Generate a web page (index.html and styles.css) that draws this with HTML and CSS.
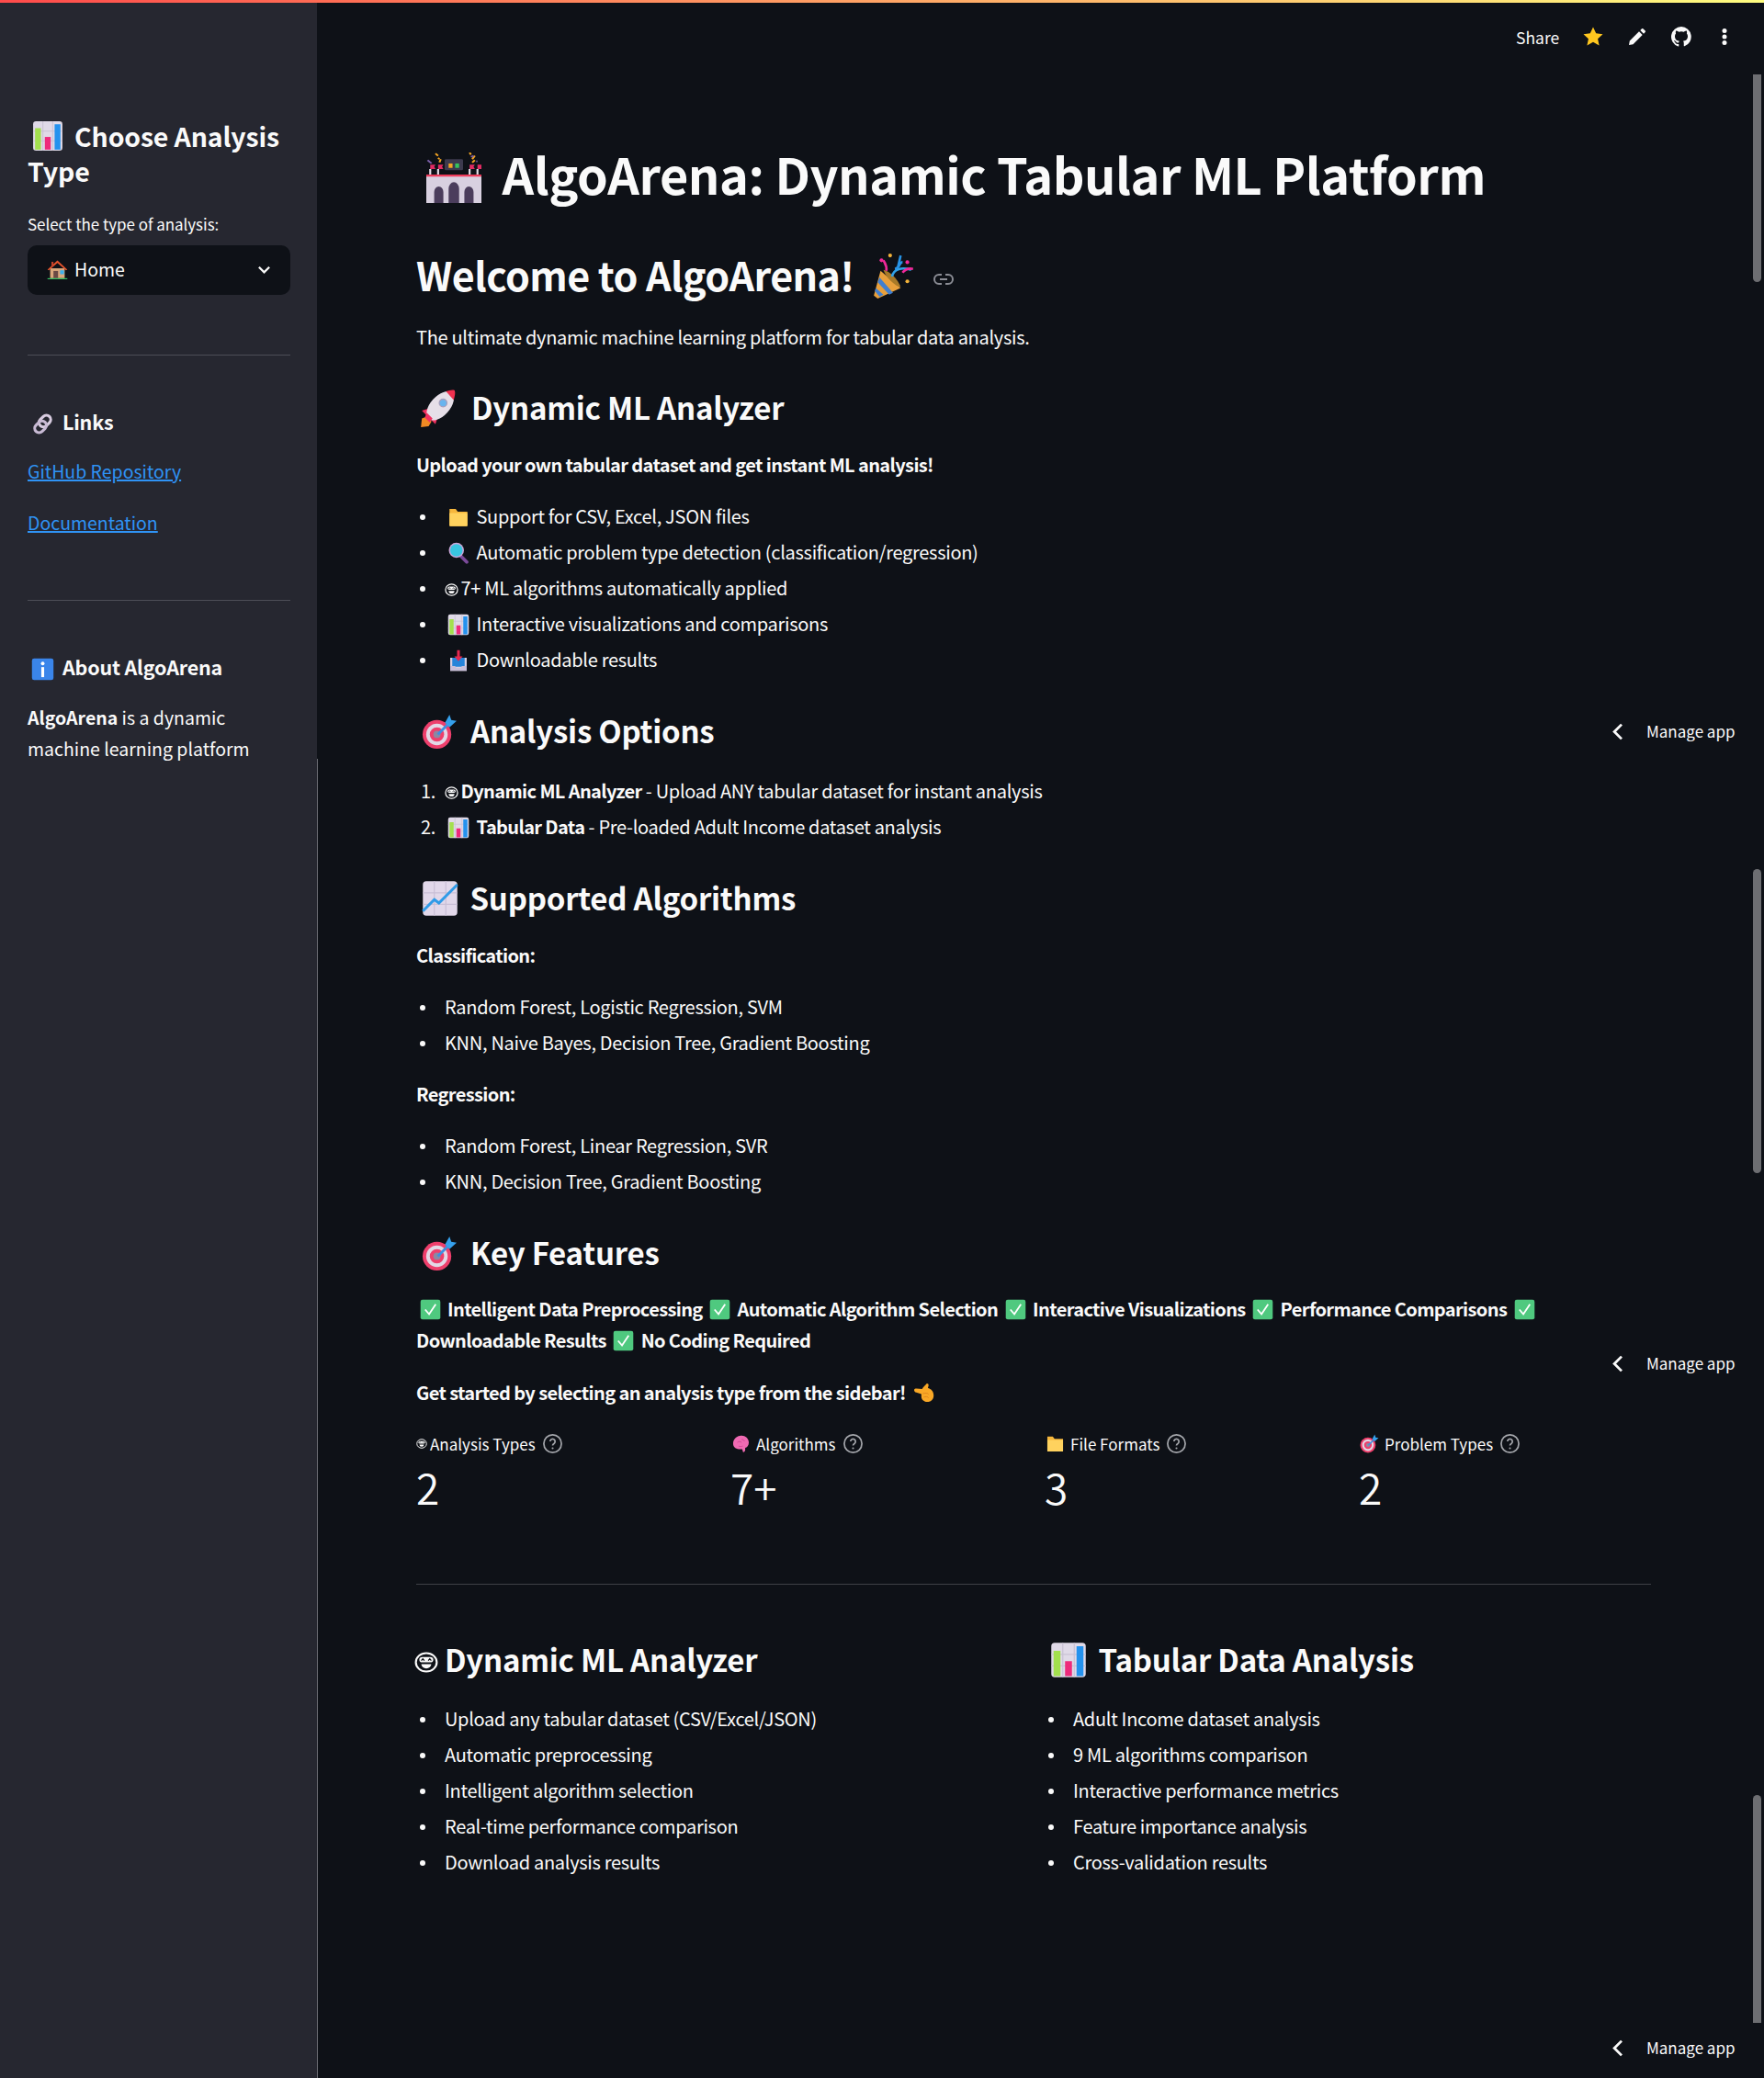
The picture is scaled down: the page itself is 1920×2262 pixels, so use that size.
FILE: index.html
```html
<!DOCTYPE html>
<html lang="en">

<head>
    <meta charset="UTF-8">
    <title>AlgoArena</title>
    <link rel="stylesheet" href="styles.css">
</head>

<body>
    <svg class="sprites" xmlns="http://www.w3.org/2000/svg">
        <symbol id="e-chart" viewBox="0 0 32 32">
            <rect x="1" y="1" width="30" height="30" rx="3" fill="#e0dae8"/>
            <path d="M1 11h30M1 21h30M11 1v30M21 1v30" stroke="#c9c2d4" stroke-width="1"/>
            <rect x="3" y="8" width="6" height="22" fill="#a3e04e"/>
            <rect x="13" y="17" width="6" height="13" fill="#ee2a7b"/>
            <rect x="23" y="4" width="6" height="26" fill="#2492ee"/>
        </symbol>
        <symbol id="e-chartup" viewBox="0 0 32 32">
            <rect x="1" y="1" width="30" height="30" rx="3" fill="#e2d8ea"/>
            <path d="M1 11h30M1 21h30M11 1v30M21 1v30" stroke="#c9bfd6" stroke-width="1"/>
            <path d="M1 27l10-10 4 3L31 4" fill="none" stroke="#2f9be8" stroke-width="2.4"/>
        </symbol>
        <symbol id="e-stadium" viewBox="3 0 42 46" preserveAspectRatio="none">
            <path d="M3 20h42v26H3z" fill="#d8d0e0"/>
            <path d="M3 20h42v2H3z" fill="#ee3b5b"/>
            <path d="M9 46V36a3.500 5 0 0 1 7 0v10zM20 46V33a4 6 0 0 1 8 0v13zM32 46V36a3.500 5 0 0 1 7 0v10z" fill="#4b3d5c"/>
            <path d="M6 20v-5M12 20v-5M36 20v-5M42 20v-5" stroke="#e6e0ea" stroke-width="1.500"/>
            <path d="M6 11h4l-1 2 1 2H6zM12 11h4l-1 2 1 2h-4zM36 11h4l-1 2 1 2h-4zM42 11h4l-1 2 1 2h-4z" fill="#e02b63"/>
            <rect x="17" y="6" width="14" height="10" rx="1" fill="#3d3a4e"/>
            <path d="M20 10h3v4h-3z" fill="#f6a623"/>
            <path d="M25 10h3v4h-3z" fill="#36c45c"/>
            <path d="M10 1l2 2M14 6l-1 3M40 3l-2 3M36 0l1 2M38 9l2-2M12 5l1 1" stroke="#f6a623" stroke-width="1.500"/>
            <path d="M4 7l3 3M37 4l2-1M41 8h1" stroke="#7a5fa8" stroke-width="1.500"/>
        </symbol>
        <symbol id="e-party" viewBox="0 0 48 48">
            <path d="M10 18L3 44l4 3 24-11z" fill="#e8a03c"/>
            <path d="M7 30l12 13 4-2-14-16zM4 39l5 6 4-2-8-7z" fill="#3f7fd1"/>
            <path d="M13 17a7 16 -42 0 1 18 18a7 16 -42 0 1-18-18z" fill="#a87a28"/>
            <path d="M22 24c2-8 10-10 20-7" fill="none" stroke="#30a2e8" stroke-width="2.500"/>
            <path d="M25 16c6-1 4-7 8-7M31 2l-3 13" fill="none" stroke="#2793e6" stroke-width="2.500"/>
            <path d="M33 20c3-4 6-5 11-4M13 7c2 4 4 6 3 11" fill="none" stroke="#f0289a" stroke-width="2.500"/>
            <circle cx="11" cy="7" r="2" fill="#f0289a"/>
            <circle cx="20" cy="2" r="2" fill="#f3b33a"/>
            <circle cx="38" cy="9" r="2" fill="#f0289a"/>
            <circle cx="38" cy="29" r="2" fill="#f3b33a"/>
        </symbol>
        <symbol id="e-rocket" viewBox="0 0 40 40">
            <path d="M3 39l1-9 5-2 5 5-3 5z" fill="#f08a24"/>
            <path d="M4 22l9-3-2 10zM18 36l3-9-10 2z" fill="#f0305f"/>
            <ellipse cx="23" cy="17" rx="10" ry="18" transform="rotate(42 23 17)" fill="#e6dfe8"/>
            <path d="M29 2c3-1 7-2 9-1 1 3 0 6-1 10z" fill="#f0304f"/>
            <circle cx="26" cy="14" r="4" fill="#68b4ee" stroke="#a89fbc" stroke-width="1.200"/>
            <path d="M9 24l6 6-3 4-5-5z" fill="#f0305f"/>
        </symbol>
        <symbol id="e-folder" viewBox="0 0 32 32">
            <path d="M3 4h9l3 4h14v20a1 1 0 0 1-1 1H4a1 1 0 0 1-1-1z" fill="#f6b73c"/>
            <path d="M3 10h26v18a1 1 0 0 1-1 1H4a1 1 0 0 1-1-1z" fill="#ffd25e"/>
        </symbol>
        <symbol id="e-magnifier" viewBox="0 0 32 32">
            <path d="M19 20l9 9" stroke="#7b4a9a" stroke-width="5" stroke-linecap="round"/>
            <circle cx="13" cy="12" r="11" fill="#c9a7d8"/>
            <circle cx="13" cy="12" r="9" fill="#38c6e0"/>
        </symbol>
        <symbol id="e-inbox" viewBox="0 0 32 32">
            <path d="M4 12h24v19H4z" fill="#d8d0e2" rx="2"/>
            <path d="M7 12h18v13H7z" fill="#2684d9"/>
            <path d="M4 24h7l2 3h6l2-3h7v7H4z" fill="#c9bfd8"/>
            <path d="M14 1h4v9h4l-6 7-6-7h4z" fill="#e8284f"/>
        </symbol>
        <symbol id="e-target" viewBox="0 0 40 40">
            <circle cx="17" cy="23" r="16" fill="#ee3f6c"/>
            <circle cx="17" cy="23" r="12" fill="#e3d8e6"/>
            <circle cx="17" cy="23" r="8" fill="#ee3f6c"/>
            <circle cx="17" cy="23" r="4" fill="#8d88a0"/>
            <path d="M18 23l14-14" stroke="#3f8ee0" stroke-width="3"/>
            <path d="M26 10l5-9 2 6 6 1-8 7z" fill="#35a0ec"/>
        </symbol>
        <symbol id="e-check" viewBox="0 0 32 32">
            <rect x="1" y="1" width="30" height="30" rx="3" fill="#4fc97f"/>
            <path d="M8 16l6 7L24 8" fill="none" stroke="#fff" stroke-width="2.500"/>
        </symbol>
        <symbol id="e-hand" viewBox="1 2 30 28">
            <path d="M2 11c0-2 2-2 3-2l8 .5c2-3 4-5 6-7 1-1 3 0 3 2l-1 4c4 1 8 4 8 10 0 6-4 9-9 9-4 0-8-3-8-7v-4l-7-2c-2 0-3-2-3-3.500z" fill="#f9a826"/>
            <path d="M14 16c3-1 7-1 8 1M15 21c3-1 6-1 7 1" fill="none" stroke="#d97f1c" stroke-width="1"/>
        </symbol>
        <symbol id="e-brain" viewBox="0 0 32 32">
            <path d="M14 3c7-2 15 3 15 11 0 5-3 8-6 9v3c0 2-1 4-3 4-1 0-1-3-2-5-7 1-15-1-15-9C3 9 8 4 14 3z" fill="#f06ab3"/>
            <path d="M10 14c2-2 5-2 7 0M17 9c2 0 4 1 5 3M12 20c2 1 5 1 7 0" fill="none" stroke="#c9408e" stroke-width="1.200"/>
        </symbol>
        <symbol id="e-link" viewBox="0 0 32 32">
            <rect x="13" y="3" width="12" height="18" rx="6" transform="rotate(45 19 12)" fill="none" stroke="#d8cce0" stroke-width="4"/>
            <rect x="7" y="11" width="12" height="18" rx="6" transform="rotate(45 13 20)" fill="none" stroke="#c8bad4" stroke-width="4"/>
        </symbol>
        <symbol id="e-info" viewBox="0 0 32 32">
            <rect x="1" y="1" width="30" height="30" rx="3" fill="#3a85ea"/>
            <circle cx="16" cy="8" r="2.500" fill="#fff"/>
            <rect x="14" y="13" width="4" height="14" fill="#fff"/>
        </symbol>
        <symbol id="e-house" viewBox="0 0 32 32">
            <path d="M5 14h22v15H5z" fill="#dba87c"/>
            <path d="M1 16L16 2l15 14-2 1L16 6 3 17z" fill="#e8542c"/>
            <path d="M7 4h3v6l-3 3z" fill="#c4432b"/>
            <path d="M10 18h7v11h-7z" fill="#6a4a45"/>
            <path d="M20 17h6v6h-6z" fill="#3eb0ec"/>
            <path d="M1 29h30v1.500H1z" fill="#38d16b"/>
        </symbol>
        <symbol id="e-face" viewBox="0 0 24 24" preserveAspectRatio="none">
            <circle cx="12" cy="12" r="10.500" fill="none" stroke="currentColor" stroke-width="2"/>
            <rect x="5" y="6" width="14" height="6" rx="3" fill="currentColor"/>
            <path d="M7 10l1.500-2 1.500 2M14 10l1.500-2 1.500 2" fill="none" stroke="#0e1117" stroke-width="1.200"/>
            <path d="M7 14h10a5 5 0 0 1-10 0z" fill="currentColor"/>
        </symbol>
        <symbol id="i-help" viewBox="0 0 24 24">
            <circle cx="12" cy="12" r="10" fill="none" stroke="currentColor" stroke-width="1.800"/>
            <path d="M9.200 9.500a2.800 2.800 0 1 1 4.300 2.400c-1 .6-1.500 1.200-1.500 2.300" fill="none" stroke="currentColor" stroke-width="1.800"/>
            <circle cx="12" cy="17.200" r="1.100" fill="currentColor"/>
        </symbol>
        <symbol id="i-back" viewBox="0 0 24 24">
            <path d="M16 3L7 12l9 9" fill="none" stroke="currentColor" stroke-width="3.200"/>
        </symbol>
    </svg>

    <div class="deco"></div>

    <aside class="sidebar">
        <h2 class="side_title"><svg class="emo side_title_emo"><use href="#e-chart"/></svg>Choose Analysis Type</h2>
        <label class="side_label">Select the type of analysis:</label>
        <div class="select_box">
            <span class="select_value"><svg class="emo select_emo"><use href="#e-house"/></svg>Home</span>
            <svg class="chevron" viewBox="0 0 16 16"><path d="M2 5l6 6 6-6" fill="none" stroke="#fafafa" stroke-width="2.400"/></svg>
        </div>
        <hr class="side_hr hr_first">
        <h3 class="side_head"><svg class="emo side_head_emo"><use href="#e-link"/></svg>Links</h3>
        <p class="side_link link_first"><a href="#">GitHub Repository</a></p>
        <p class="side_link link_second"><a href="#">Documentation</a></p>
        <hr class="side_hr hr_second">
        <h3 class="side_head"><svg class="emo side_head_emo"><use href="#e-info"/></svg>About AlgoArena</h3>
        <p class="side_text"><b>AlgoArena</b> is a dynamic<br>machine learning platform</p>
    </aside>

    <main class="main">
        <h1 class="title"><svg class="emo title_emo"><use href="#e-stadium"/></svg>AlgoArena: Dynamic Tabular ML Platform</h1>

        <h2 class="welcome">Welcome to AlgoArena!<svg class="emo welcome_emo"><use href="#e-party"/></svg><svg class="anchor" viewBox="0 0 24 24"><path d="M10 7H7a5 5 0 0 0 0 10h3M14 7h3a5 5 0 0 1 0 10h-3M8 12h8" fill="none" stroke="#8b8d95" stroke-width="2"/></svg></h2>
        <p class="txt txt_lead">The ultimate dynamic machine learning platform for tabular data analysis.</p>

        <h3 class="head"><svg class="emo head_emo rocket_emo"><use href="#e-rocket"/></svg>Dynamic ML Analyzer</h3>
        <p class="txt"><b>Upload your own tabular dataset and get instant ML analysis!</b></p>
        <ul class="list">
            <li><svg class="emo li_emo"><use href="#e-folder"/></svg>Support for CSV, Excel, JSON files</li>
            <li><svg class="emo li_emo"><use href="#e-magnifier"/></svg>Automatic problem type detection (classification/regression)</li>
            <li><svg class="face"><use href="#e-face"/></svg>7+ ML algorithms automatically applied</li>
            <li><svg class="emo li_emo"><use href="#e-chart"/></svg>Interactive visualizations and comparisons</li>
            <li><svg class="emo li_emo"><use href="#e-inbox"/></svg>Downloadable results</li>
        </ul>

        <h3 class="head"><svg class="emo head_emo target_emo"><use href="#e-target"/></svg>Analysis Options</h3>
        <ol class="list list_num">
            <li><svg class="face"><use href="#e-face"/></svg><b>Dynamic ML Analyzer</b> - Upload ANY tabular dataset for instant analysis</li>
            <li><svg class="emo li_emo"><use href="#e-chart"/></svg><b>Tabular Data</b> - Pre-loaded Adult Income dataset analysis</li>
        </ol>

        <h3 class="head"><svg class="emo head_emo"><use href="#e-chartup"/></svg>Supported Algorithms</h3>
        <p class="txt"><b>Classification:</b></p>
        <ul class="list">
            <li>Random Forest, Logistic Regression, SVM</li>
            <li>KNN, Naive Bayes, Decision Tree, Gradient Boosting</li>
        </ul>
        <p class="txt"><b>Regression:</b></p>
        <ul class="list">
            <li>Random Forest, Linear Regression, SVR</li>
            <li>KNN, Decision Tree, Gradient Boosting</li>
        </ul>

        <h3 class="head"><svg class="emo head_emo target_emo"><use href="#e-target"/></svg>Key Features</h3>
        <p class="txt txt_key"><b><svg class="emo check_emo"><use href="#e-check"/></svg>Intelligent Data Preprocessing <svg class="emo check_emo"><use href="#e-check"/></svg>Automatic Algorithm Selection <svg class="emo check_emo"><use href="#e-check"/></svg>Interactive Visualizations <svg class="emo check_emo"><use href="#e-check"/></svg>Performance Comparisons <svg class="emo check_emo"><use href="#e-check"/></svg> Downloadable Results <svg class="emo check_emo"><use href="#e-check"/></svg>No Coding Required</b></p>
        <p class="txt txt_start"><b>Get started by selecting an analysis type from the sidebar!<svg class="emo hand_emo"><use href="#e-hand"/></svg></b></p>

        <div class="metrics">
            <div>
                <div class="metric_lb"><svg class="face face_sm"><use href="#e-face"/></svg>Analysis Types<svg class="help"><use href="#i-help"/></svg></div>
                <div class="metric_val">2</div>
            </div>
            <div>
                <div class="metric_lb"><svg class="emo metric_emo"><use href="#e-brain"/></svg>Algorithms<svg class="help"><use href="#i-help"/></svg></div>
                <div class="metric_val">7+</div>
            </div>
            <div>
                <div class="metric_lb"><svg class="emo metric_emo"><use href="#e-folder"/></svg>File Formats<svg class="help"><use href="#i-help"/></svg></div>
                <div class="metric_val">3</div>
            </div>
            <div>
                <div class="metric_lb"><svg class="emo metric_emo"><use href="#e-target"/></svg>Problem Types<svg class="help"><use href="#i-help"/></svg></div>
                <div class="metric_val">2</div>
            </div>
        </div>

        <hr class="main_hr">

        <div class="cols">
            <div>
                <h3 class="head head_cols"><svg class="face face_lg"><use href="#e-face"/></svg>Dynamic ML Analyzer</h3>
                <ul class="list">
                    <li>Upload any tabular dataset (CSV/Excel/JSON)</li>
                    <li>Automatic preprocessing</li>
                    <li>Intelligent algorithm selection</li>
                    <li>Real-time performance comparison</li>
                    <li>Download analysis results</li>
                </ul>
            </div>
            <div>
                <h3 class="head head_cols"><svg class="emo head_emo"><use href="#e-chart"/></svg>Tabular Data Analysis</h3>
                <ul class="list">
                    <li>Adult Income dataset analysis</li>
                    <li>9 ML algorithms comparison</li>
                    <li>Interactive performance metrics</li>
                    <li>Feature importance analysis</li>
                    <li>Cross-validation results</li>
                </ul>
            </div>
        </div>
    </main>

    <div class="toolbar">
        <span class="share">Share</span>
        <svg class="tool_icon tool_star" viewBox="0 0 24 24"><path d="M12 1.500l3.200 6.800 7.300.9-5.400 5 1.500 7.300-6.600-3.700-6.600 3.700 1.500-7.300-5.400-5 7.300-.9z" fill="#ffc71f"/></svg>
        <svg class="tool_icon" viewBox="0 0 24 24"><path d="M4 20l.8-4.500L15 5.300l3.700 3.700L8.500 19.200zM16.300 4l1.700-1.700a1 1 0 0 1 1.400 0l2.300 2.300a1 1 0 0 1 0 1.400L20 7.700z" fill="#fafafa" transform="translate(-1 1)"/></svg>
        <svg class="tool_icon tool_gh" viewBox="0 0 16 16"><path d="M8 0a8 8 0 0 0-2.500 15.600c.4.100.5-.2.500-.4v-1.400c-2.200.5-2.700-1-2.700-1-.4-.9-.9-1.200-.9-1.200-.7-.5.100-.5.100-.5.800.1 1.200.8 1.200.8.700 1.200 1.900.9 2.300.7.100-.5.300-.9.500-1.100-1.800-.2-3.600-.9-3.600-4 0-.9.300-1.600.8-2.100-.1-.2-.4-1 .1-2.100 0 0 .7-.2 2.200.8a7.600 7.600 0 0 1 4 0c1.500-1 2.200-.8 2.200-.8.400 1.100.2 1.900.1 2.100.5.600.8 1.300.8 2.100 0 3.100-1.900 3.700-3.700 3.900.3.300.6.800.6 1.500v2.200c0 .2.100.5.600.4A8 8 0 0 0 8 0z" fill="#fafafa"/></svg>
        <svg class="tool_icon" viewBox="0 0 24 24"><circle cx="12" cy="5.500" r="2.500" fill="#fafafa"/><circle cx="12" cy="12" r="2.500" fill="#fafafa"/><circle cx="12" cy="18.500" r="2.500" fill="#fafafa"/></svg>
    </div>

    <div class="manage manage_1"><svg class="manage_back"><use href="#i-back"/></svg>Manage app</div>
    <div class="manage manage_2"><svg class="manage_back"><use href="#i-back"/></svg>Manage app</div>
    <div class="manage manage_3"><svg class="manage_back"><use href="#i-back"/></svg>Manage app</div>

    <div class="thumb thumb_1"></div>
    <div class="thumb thumb_2"></div>
    <div class="thumb thumb_3"></div>
    <div class="side_edge"></div>
</body>

</html>
```
FILE: styles.css
```css
* {
    margin: 0;
    padding: 0;
    box-sizing: border-box;
}

html,
body {
    height: 2262px;
    overflow: hidden;
}

body {
    position: relative;
    display: flex;
    background: #0e1117;
    color: #fafafa;
    font-family: "Noto Sans CJK SC", "Noto Sans", sans-serif;
}

.sprites {
    position: absolute;
    width: 0;
    height: 0;
}

.deco {
    position: absolute;
    top: 0;
    left: 0;
    right: 0;
    height: 3px;
    background: linear-gradient(90deg, #ff4b4b, #fffd80);
}

.emo {
    display: inline-block;
}

/* sidebar */

.sidebar {
    width: 345px;
    flex: none;
    padding: 129px 29px 0 30px;
    background: #262730;
}

.side_title {
    font-size: 28.500px;
    font-weight: 600;
    line-height: 38px;
    letter-spacing: -0.150px;
}

.side_title_emo {
    width: 34px;
    height: 34px;
    margin: 0 12px 0 5px;
    vertical-align: -5px;
}

.side_label {
    display: block;
    margin-top: 26px;
    font-size: 17px;
    line-height: 26px;
    letter-spacing: -0.050px;
}

.select_box {
    display: flex;
    align-items: center;
    justify-content: space-between;
    height: 54px;
    margin-top: 10px;
    padding: 0 21px 2px;
    background: #0e1117;
    border-radius: 10px;
}

.select_value {
    font-size: 19.500px;
    line-height: 50px;
}

.select_emo {
    width: 23px;
    height: 23px;
    margin-right: 7px;
    vertical-align: -4px;
}

.chevron {
    width: 15px;
    height: 15px;
}

.side_hr {
    border: 0;
    height: 1px;
    background: #4d4e57;
}

.hr_first {
    margin-top: 65px;
}

.hr_second {
    margin-top: 67px;
}

.side_head {
    height: 34px;
    margin-top: 56px;
    font-size: 21.500px;
    font-weight: 600;
    line-height: 31px;
    letter-spacing: -0.200px;
}

.side_head_emo {
    width: 25px;
    height: 25px;
    margin: 0 9px 0 4px;
    vertical-align: -6px;
}

.side_link {
    font-size: 19.500px;
    line-height: 34px;
}

.side_link a {
    color: #2f93f5;
    text-decoration-thickness: 2px;
}

.link_first {
    margin-top: 19px;
}

.link_second {
    margin-top: 22px;
}

.side_text {
    margin-top: 20px;
    font-size: 19.500px;
    line-height: 34px;
}

.side_text b {
    font-weight: 600;
}

/* main column */

.main {
    flex: 1;
    padding: 154px 123px 0 108px;
}

.title {
    font-size: 54px;
    font-weight: 700;
    line-height: 70px;
    letter-spacing: -0.450px;
}

.title_emo {
    width: 60px;
    height: 55px;
    margin: 0 22.500px 0 11px;
    vertical-align: -9px;
}

.welcome {
    margin-top: 44px;
    font-size: 43px;
    font-weight: 600;
    line-height: 60px;
    letter-spacing: -0.580px;
}

.welcome_emo {
    width: 50px;
    height: 50px;
    margin-left: 18px;
    vertical-align: -9px;
}

.anchor {
    width: 24px;
    height: 24px;
    margin-left: 17px;
    vertical-align: 1px;
}

.txt {
    margin-top: 22px;
    font-size: 20px;
    line-height: 34px;
    letter-spacing: -0.300px;
}

.txt_lead {
    margin-top: 22px;
}

.txt_key {
    margin-top: 20.500px;
}

.txt_start {
    margin-top: 23px;
}

.txt b {
    font-weight: 600;
    letter-spacing: -0.620px;
}

.head {
    height: 48px;
    margin-top: 35px;
    font-size: 33px;
    font-weight: 600;
    line-height: 48px;
    letter-spacing: -0.230px;
}

.head_cols {
    margin-top: 57px;
}

.head_emo {
    width: 40px;
    height: 40px;
    margin: 0 12.500px 0 6px;
    vertical-align: -7px;
}

.rocket_emo {
    width: 42px;
    height: 42px;
    margin: 0 16px 0 2px;
    vertical-align: -9px;
}

.target_emo {
    width: 39px;
    height: 39px;
    margin: 0 14px 0 6px;
}

.list {
    margin-top: 18.900px;
    margin-bottom: -1px;
    padding-left: 31px;
    font-size: 20px;
    line-height: 39px;
    letter-spacing: -0.300px;
    list-style: none;
}

.list li::before {
    content: "";
    display: inline-block;
    width: 6px;
    height: 6px;
    margin: 0 21px 0 -27px;
    vertical-align: 4px;
    background: #fafafa;
    border-radius: 50%;
}

.list_num li::before {
    content: counter(list-item) ".";
    width: 26px;
    height: auto;
    margin: 0 0 0 -26px;
    vertical-align: baseline;
    background: none;
    border-radius: 0;
}

.list b {
    font-weight: 600;
    letter-spacing: -0.620px;
}

.list_num {
    margin-top: 22.500px;
}

.list + .txt {
    margin-top: 21px;
}

.li_emo {
    width: 24px;
    height: 24px;
    margin: 0 7.500px 0 3px;
    vertical-align: -5px;
}

.face {
    width: 15px;
    height: 14px;
    margin: 0 2.500px 0 0;
    vertical-align: -1px;
    color: #fafafa;
}

.face_sm {
    width: 12px;
    height: 11px;
    margin: 0 3px 0 0;
    vertical-align: 0;
}

.face_lg {
    width: 26px;
    height: 23px;
    margin: 0 7px 0 -2px;
    vertical-align: -1px;
}

.check_emo {
    width: 23px;
    height: 23px;
    margin: 0 7.500px 0 3.500px;
    vertical-align: -4px;
}

.hand_emo {
    width: 24px;
    height: 22px;
    margin-left: 8px;
    vertical-align: -4px;
}

.metrics {
    display: grid;
    grid-template-columns: repeat(4, 1fr);
    column-gap: 24px;
    margin-top: 24px;
}

.metric_lb {
    display: flex;
    align-items: center;
    height: 30px;
    font-size: 17px;
}

.metric_emo {
    width: 21px;
    height: 21px;
    margin: 0 6px 0 1px;
}

.help {
    width: 23px;
    height: 23px;
    margin-left: 7px;
    color: #a3a5aa;
}

.metric_val {
    margin-top: 2px;
    margin-bottom: 3px;
    font-size: 46px;
    font-weight: 350;
    line-height: 58px;
}

.main_hr {
    margin-top: 74px;
    border: 0;
    height: 1px;
    background: #3f4147;
}

.cols {
    display: grid;
    grid-template-columns: 1fr 1fr;
    column-gap: 24px;
}

.cols .list {
    margin-top: 21px;
}

/* floating things */

.toolbar {
    position: absolute;
    top: 24px;
    left: 1650px;
    display: flex;
    align-items: center;
    height: 32px;
}

.share {
    width: 72px;
    font-size: 17.500px;
}

.tool_icon {
    width: 24px;
    height: 24px;
    margin-right: 24px;
}

.tool_star {
    flex: none;
}

.tool_gh {
    width: 22px;
    height: 22px;
    margin: 0 24px 0 1px;
}

.manage {
    position: absolute;
    left: 1751px;
    display: flex;
    align-items: center;
    font-size: 17px;
    line-height: 26px;
}

.manage_1 {
    top: 783px;
}

.manage_2 {
    top: 1471px;
}

.manage_3 {
    top: 2216px;
}

.manage_back {
    width: 21px;
    height: 21px;
    margin-right: 20px;
}

.thumb {
    position: absolute;
    left: 1908px;
    width: 9px;
    background: #6d6e72;
    border-radius: 5px;
}

.thumb_1 {
    top: 81px;
    height: 226px;
    border-top-left-radius: 0;
    border-top-right-radius: 0;
}

.thumb_2 {
    top: 946px;
    height: 331px;
}

.thumb_3 {
    top: 1954px;
    height: 248px;
    border-bottom-left-radius: 0;
    border-bottom-right-radius: 0;
}

.side_edge {
    position: absolute;
    top: 826px;
    bottom: 0;
    left: 345px;
    width: 1px;
    background: #6a6b72;
}
```
